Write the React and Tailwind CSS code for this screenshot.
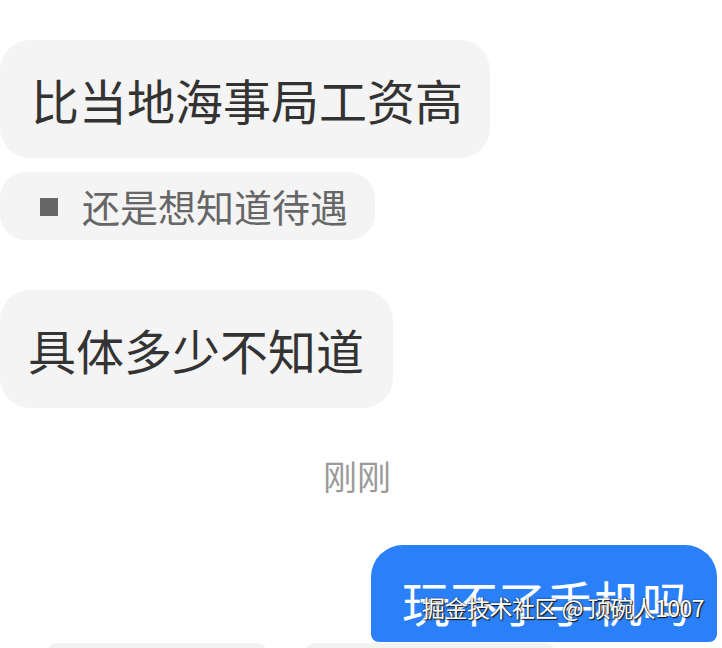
export default function App() {
  const font = { fontFamily: '"Noto Sans CJK SC", "Noto Sans", sans-serif' };
  return (
    <div className="w-[722px] h-[648px] overflow-hidden bg-white relative" style={font}>
      <div className="flex flex-col pt-[40px]">
        <div className="self-start h-[118px] w-[490px] rounded-[30px] bg-[#f4f4f4] flex items-center pl-[31px]">
          <span className="text-[48px] leading-none text-[#333333] whitespace-nowrap">比当地海事局工资高</span>
        </div>
        <div className="self-start mt-[14px] h-[68px] w-[375px] rounded-[26px] bg-[#f4f4f4] flex items-center pl-[40px] gap-[24px]">
          <span className="w-[18px] h-[18px] bg-[#666666] shrink-0 mt-[2px]" />
          <span className="text-[38px] leading-none text-[#666666] whitespace-nowrap">还是想知道待遇</span>
        </div>
        <div className="self-start mt-[50px] h-[118px] w-[393px] rounded-[30px] bg-[#f4f4f4] flex items-center pl-[28px]">
          <span className="text-[48px] leading-none text-[#333333] whitespace-nowrap">具体多少不知道</span>
        </div>
        <div className="mt-[51px] h-[34px] flex justify-center pr-[8px]">
          <span className="text-[34px] leading-[34px] text-[#9a9a9a] whitespace-nowrap">刚刚</span>
        </div>
        <div className="self-end mr-[5px] mt-[52px] h-[97px] w-[346px] rounded-t-[32px] rounded-b-[8px] bg-[#2a80f8] flex items-center pl-[31px] pt-[14px] relative">
          <span className="text-[48px] leading-none text-white whitespace-nowrap">玩不了手机吗</span>
          <span className="absolute left-[51px] top-[51px] text-[23px] leading-none text-white whitespace-nowrap tracking-[-0.5px] [text-shadow:0_0_2px_#222,1px_1px_1px_#111]">
            掘金技术社区 @ 顶碗人1007
          </span>
        </div>
        <div className="mt-[1px] h-[10px] flex gap-[38px] pl-[47px]">
          <div className="w-[220px] h-[10px] rounded-t-[12px] bg-[#f2f2f2]" />
          <div className="w-[250px] h-[10px] rounded-t-[12px] bg-[#f2f2f2]" />
        </div>
      </div>
    </div>
  );
}
